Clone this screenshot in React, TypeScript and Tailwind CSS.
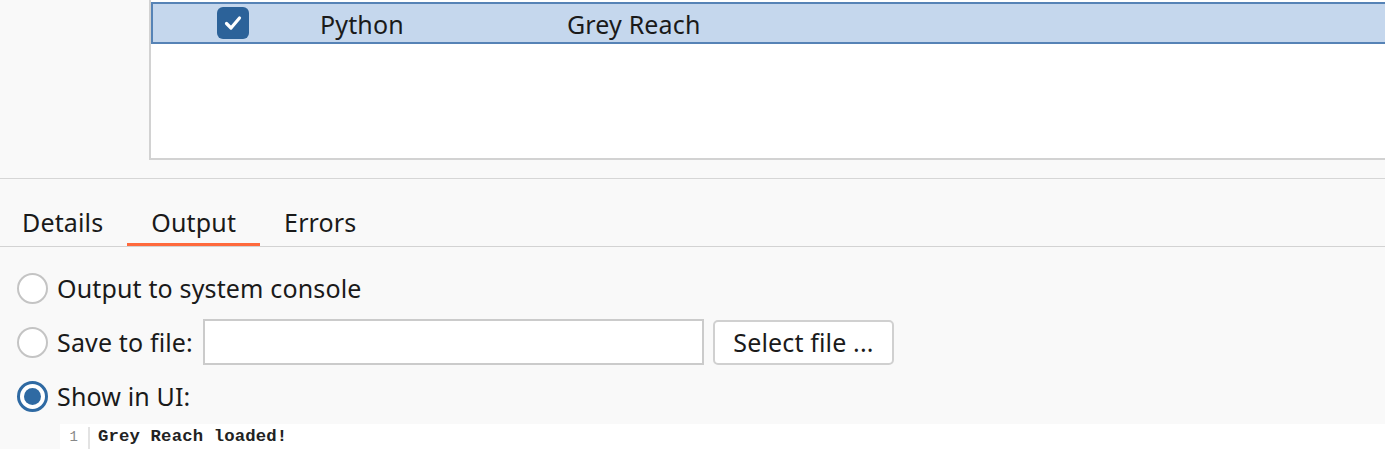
import type { ReactNode } from "react";

const uiFont = "font-['Noto_Sans','Open_Sans',sans-serif]";

function Radio({ checked, children }: { checked?: boolean; children: ReactNode }) {
  return (
    <div className="flex h-[54px] items-center gap-[9px]">
      {checked ? (
        <span className="flex h-[31px] w-[31px] shrink-0 items-center justify-center rounded-full border-[3px] border-[#2f6aa3] bg-white">
          <span className="h-[17px] w-[17px] rounded-full bg-[#2f6aa3]" />
        </span>
      ) : (
        <span className="h-[31px] w-[31px] shrink-0 rounded-full border-2 border-[#c4c4c4] bg-white" />
      )}
      {children}
    </div>
  );
}

export default function App() {
  const tabs = ["Details", "Output", "Errors"];
  return (
    <div className={`h-[449px] w-[1385px] overflow-hidden bg-[#f9f9f9] text-[25px] leading-[34px] tracking-[0.15px] text-[#1a1a1a] ${uiFont}`}>
      <div className="h-[179px] border-b border-[#d6d6d6] pl-[149px]">
        <div className="h-[160px] border-b-2 border-l-2 border-[#d2d2d2] bg-white pt-[2px]">
          <div className="flex h-[42px] items-center border-y-2 border-l-2 border-[#5683b6] bg-[#c5d7ed]">
            <span className="ml-[64px] flex h-[32px] w-[32px] items-center justify-center rounded-[6px] bg-[#2c6299]">
              <svg width="24" height="24" viewBox="0 0 24 24" fill="none">
                <path d="M5.5 12.5l4.5 4.5L18.5 7" stroke="white" strokeWidth="3.2" strokeLinecap="round" strokeLinejoin="round" />
              </svg>
            </span>
            <span className="ml-[71px] w-[247px] pt-[2px]">Python</span>
            <span className="pt-[2px]">Grey Reach</span>
          </div>
        </div>
      </div>

      <div className="flex h-[68px] items-end border-b border-[#d3d3d3]">
        {tabs.map((t, i) => (
          <div key={t} className={`flex h-[46px] flex-col px-6 ${i === 0 ? "pl-[22px]" : ""}`}>
            <span className="mt-[5px]">{t}</span>
            <span className={`mt-auto h-[3px] ${t === "Output" ? "-mx-6 bg-[#ff6a3d]" : ""}`} />
          </div>
        ))}
      </div>

      <div className="flex flex-col pl-[17px] pt-[14px]">
        <Radio>
          <span>Output to system console</span>
        </Radio>
        <Radio>
          <span>Save to file:</span>
          <span className="ml-[1px] h-[46px] w-[501px] border-2 border-[#cbcbcb] bg-white" />
          <button className="h-[45px] w-[181px] rounded-[5px] border-2 border-[#d0d0d0] bg-white text-[25px]">
            Select file ...
          </button>
        </Radio>
        <Radio checked>
          <span>Show in UI:</span>
        </Radio>
      </div>

      <div className="ml-[60px] mt-[1px] flex h-[25px] bg-white pt-[3px] font-['Liberation_Mono',monospace] text-[17.3px] leading-[20px]">
        <span className="w-[30px] border-r-2 border-[#e3e3e3] pr-[10px] text-right text-[14px] text-[#888]">1</span>
        <span className="pl-[8px] font-semibold text-[#222]">Grey Reach loaded!</span>
      </div>
    </div>
  );
}
